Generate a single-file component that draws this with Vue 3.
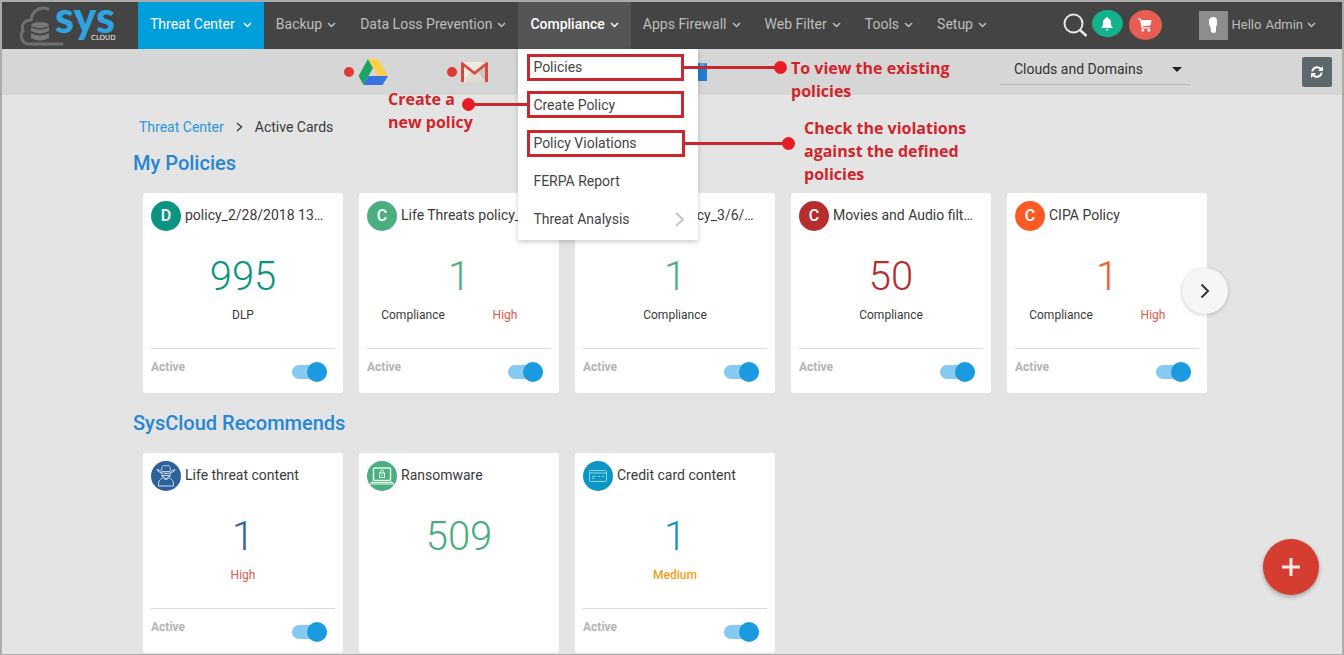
<script setup>
import { ref } from 'vue'

const nav = [
  { label: 'Threat Center', state: 'current' },
  { label: 'Backup' },
  { label: 'Data Loss Prevention' },
  { label: 'Compliance', state: 'open' },
  { label: 'Apps Firewall' },
  { label: 'Web Filter' },
  { label: 'Tools' },
  { label: 'Setup' },
]

const menu = [
  { label: 'Policies', key: 'policies' },
  { label: 'Create Policy', key: 'create' },
  { label: 'Policy Violations', key: 'violations' },
  { label: 'FERPA Report' },
  { label: 'Threat Analysis', more: true },
]

const sections = ref([
  {
    title: 'My Policies',
    scroll: true,
    cards: [
      { title: 'policy_2/28/2018 13:45', letter: 'D', tone: 'teal', count: 995, type: 'DLP', on: true },
      { title: 'Life Threats policy_3/6/2018', letter: 'C', tone: 'green', count: 1, type: 'Compliance', level: 'High', on: true },
      { title: 'Violence policy_3/6/2018', letter: 'C', tone: 'green', count: 1, type: 'Compliance', on: true },
      { title: 'Movies and Audio filter', letter: 'C', tone: 'red', count: 50, type: 'Compliance', on: true },
      { title: 'CIPA Policy', letter: 'C', tone: 'orange', count: 1, type: 'Compliance', level: 'High', on: true },
    ],
  },
  {
    title: 'SysCloud Recommends',
    cards: [
      { title: 'Life threat content', icon: 'spy', tone: 'navy', count: 1, level: 'High', on: true },
      { title: 'Ransomware', icon: 'laptop', tone: 'green', count: 509 },
      { title: 'Credit card content', icon: 'card', tone: 'blue', count: 1, level: 'Medium', on: true },
    ],
  },
])
</script>

<template>
  <div class="page">
    <header class="topbar">
      <a class="logo" href="#" aria-label="sys cloud">
        <svg class="cloud" width="44" height="40" viewBox="0 0 44 40" fill="none">
          <path d="M28 3 C20 0 12 5 11 14 C4 14 1 19 3 25 C-1 29 2 38 9 38 H42" stroke="#707070" stroke-width="3" stroke-linecap="round" />
          <g fill="#777">
            <ellipse cx="20" cy="19" rx="9" ry="3" />
            <path d="M11 21 Q20 26 29 21 V25 Q20 30 11 25Z" />
            <path d="M11 27 Q20 32 29 27 V32 Q20 37 11 32Z" />
          </g>
        </svg>
        <span class="sys">sys</span>
        <span class="cloudword">CLOUD</span>
      </a>
      <nav class="nav">
        <div v-for="n in nav" :key="n.label" class="navitem" :class="n.state">
          <a href="#" class="navlink">
            {{ n.label }}
            <svg width="9" height="6" viewBox="0 0 9 6" fill="none"><path d="M1 1 L4.500 4.500 L8 1" stroke="currentColor" stroke-width="1.500" /></svg>
          </a>
          <div v-if="n.state === 'open'" class="menu">
            <a v-for="m in menu" :key="m.label" href="#" class="menuitem">
              {{ m.label }}
              <svg v-if="m.more" width="9" height="15" viewBox="0 0 9 15" fill="none"><path d="M1 1 L8 7.500 L1 14" stroke="#c4c4c4" stroke-width="2" /></svg>
            </a>
          </div>
        </div>
      </nav>
      <div class="tools">
        <button class="plain" aria-label="Search">
          <svg width="25" height="24" viewBox="0 0 25 24" fill="none" stroke="#e9e9e9"><circle cx="10.500" cy="10.500" r="9" stroke-width="2" /><path d="M17 17 L23.500 23" stroke-width="2.500" /></svg>
        </button>
        <button class="bell" aria-label="Notifications">
          <svg width="12" height="14" viewBox="0 0 12 14" fill="#fff"><path d="M6 0 a1 1 0 0 1 1 1 C9.500 2 10 4 10 6 C10 8.500 10.500 9.500 12 11 H0 C1.500 9.500 2 8.500 2 6 C2 4 2.500 2 5 1 A1 1 0 0 1 6 0Z M4.500 12 H7.500 A1.500 1.500 0 0 1 4.500 12Z" /></svg>
        </button>
        <button class="cart" aria-label="Cart">
          <svg width="14" height="14" viewBox="0 0 14 14" fill="#fff"><path d="M0 0.500 H2.800 L3.200 2 H13.500 L12.500 7.500 L4.500 8.300 L4.700 9.300 H12 V10.500 H3.600 L2 1.800 H0Z" /><circle cx="4.800" cy="12.300" r="1.400" /><circle cx="11" cy="12.300" r="1.400" /></svg>
        </button>
        <a href="#" class="user">
          <span class="photo">
            <svg width="10" height="18" viewBox="0 0 10 18" fill="#fff"><path d="M5 1 C8 1 9.500 3 9 6 C9 9 8.500 10 8 11 V16 Q6 18 3 16 L2.500 11 C1 9 1 8 1 5 C1 2 3 1 5 1Z" /></svg>
          </span>
          <span>Hello</span><span>Admin</span>
          <svg width="9" height="6" viewBox="0 0 9 6" fill="none"><path d="M1 1 L4.500 4.500 L8 1" stroke="currentColor" stroke-width="1.500" /></svg>
        </a>
      </div>
    </header>

    <div class="subbar">
      <div class="sources">
        <button class="source" aria-label="Google Drive">
          <i class="dot"></i>
          <svg width="30" height="26" viewBox="0 0 30 26"><path d="M10 0 L0.500 17 L5.500 26 L15 9Z" fill="#1da462" /><path d="M10 0 H20 L30 17 H20Z" fill="#ffcf48" /><path d="M10.500 17 H30 L24.500 26 H5.500Z" fill="#3671e0" /></svg>
        </button>
        <button class="source" aria-label="Gmail">
          <i class="dot"></i>
          <svg width="27" height="20" viewBox="0 0 27 20"><rect width="27" height="20" rx="1" fill="#eeeae2" /><path d="M13.500 11 L25 2 V20 H21Z" fill="#c9c6c0" /><path d="M3 20 L10 9 L13.500 12 L17 9 L24 20Z" fill="#e1ddd3" /><path d="M0 1 Q0 0 1.500 0 L13.500 9.500 L25.500 0 Q27 0 27 1 V20 H24 V4.500 L13.500 13 L3 4.500 V20 H0Z" fill="#d54c3f" /></svg>
        </button>
        <button class="source" aria-label="OneDrive">
          <i class="dot"></i>
          <svg width="27" height="18" viewBox="0 0 27 18"><path d="M6 17 a5 5 0 0 1 1-10 a7 7 0 0 1 13 0 a5 5 0 0 1 1 10Z" fill="#2a7fd0" /></svg>
        </button>
        <button class="source outlook" aria-label="Outlook">
          <i class="dot"></i>
          <svg width="40" height="18" viewBox="0 0 40 18"><rect width="40" height="18" fill="#1f7fd0" /><path d="M33 6 L40 0 H33Z" fill="#5aa3df" /></svg>
        </button>
      </div>
      <div class="picker">
        <select aria-label="Clouds and Domains"><option>Clouds and Domains</option></select>
        <svg width="10" height="5" viewBox="0 0 10 5"><path d="M0 0 H10 L5 5Z" fill="#222" /></svg>
      </div>
      <button class="refresh" aria-label="Refresh">
        <svg width="12" height="12" viewBox="0 0 12 12" fill="none" stroke="#fff" stroke-width="2"><path d="M1.300 5.300 A4.800 4.800 0 0 1 9.500 2.800" /><path d="M10.700 6.700 A4.800 4.800 0 0 1 2.500 9.200" /><path d="M12 0 V5 H7Z M0 12 V7 H5Z" fill="#fff" stroke="none" /></svg>
      </button>
    </div>

    <main class="content">
      <div class="crumbs">
        <a href="#">Threat Center</a>
        <svg width="7" height="10" viewBox="0 0 7 10" fill="none"><path d="M1 1 L5.500 5 L1 9" stroke="#444" stroke-width="1.500" /></svg>
        <span>Active Cards</span>
      </div>
      <section v-for="s in sections" :key="s.title">
        <h2>{{ s.title }}</h2>
        <div class="cards">
          <article v-for="c in s.cards" :key="c.title" class="card" :class="c.tone">
            <div class="head">
              <span class="badge">
                <template v-if="c.letter">{{ c.letter }}</template>
                <svg v-else-if="c.icon === 'spy'" width="22" height="24" viewBox="0 0 22 24" fill="none" stroke="#cfe0f2"><path d="M6.500 6 C7 2 8 1 9.500 1.500 Q11 2.500 12.500 1.500 C14 1 15 2 15.500 6" /><path d="M2 5.500 Q11 10 20 5.500 Q19 9 11 9.500 Q3 9 2 5.500Z" /><path d="M6.500 9 C6.500 13 9 15.500 11 15.500 C13 15.500 15.500 13 15.500 9" /><path d="M7 11.500 H15 M7 11.500 L11 15 L15 11.500" /><path d="M7.500 14 C4 16 3.500 17 3.500 22 H18.500 C18.500 17 18 16 14.500 14" /></svg>
                <svg v-else-if="c.icon === 'laptop'" width="26" height="18" viewBox="0 0 26 18" fill="none" stroke="#e8f7ee"><rect x="4.500" y="1" width="17" height="12.500" rx="1" stroke-width="1.500" /><path d="M4 14 L1 17 H25 L22 14" /><path d="M3 15.500 H23" /><rect x="10.500" y="6" width="5" height="4.500" /><path d="M11.500 6 V4.500 a1.500 1.500 0 0 1 3 0 V6 M13 7.500 V9" /></svg>
                <svg v-else width="18" height="12" viewBox="0 0 18 12" fill="none" stroke="#8fd6f0"><rect x="0.500" y="0.500" width="17" height="11" rx="1" /><path d="M1 3 H17 M3 6.500 H7 M3 8.500 H5 M9 6.500 H11 M12.500 6.500 H15" /></svg>
              </span>
              <h3>{{ c.title }}</h3>
            </div>
            <div class="count">{{ c.count }}</div>
            <div class="labels">
              <span v-if="c.type">{{ c.type }}</span>
              <span v-if="c.level" :class="c.level.toLowerCase()">{{ c.level }}</span>
            </div>
            <label v-if="c.on !== undefined" class="foot">
              <span>Active</span>
              <input v-model="c.on" type="checkbox" role="switch" />
            </label>
          </article>
          <button v-if="s.scroll" class="next" aria-label="Next">
            <svg width="10" height="16" viewBox="0 0 10 16" fill="none"><path d="M1.500 1.500 L8 8 L1.500 14.500" stroke="#333" stroke-width="2" /></svg>
          </button>
        </div>
      </section>
    </main>

    <button class="fab" aria-label="Add">
      <svg width="18" height="18" viewBox="0 0 18 18"><path d="M9 0 V18 M0 9 H18" stroke="#fbe9e7" stroke-width="3" /></svg>
    </button>

    <div class="box box-policies"></div>
    <div class="box box-create"></div>
    <div class="box box-violations"></div>
    <div class="line line-policies"></div>
    <div class="line line-create"></div>
    <div class="line line-violations"></div>
    <p class="note note-policies">To view the existing<br />policies</p>
    <p class="note note-create">Create a<br />new policy</p>
    <p class="note note-violations">Check the violations<br />against the defined<br />policies</p>
  </div>
</template>

<style>
body { margin: 0; }
</style>

<style scoped>
* { box-sizing: border-box; }
.page {
  position: relative;
  min-height: 100vh;
  border: 2px solid #ababab;
  border-bottom-width: 1px;
  background: #e4e4e4;
  color: #3a3a3a;
  font: 14px/16px Roboto, "Liberation Sans", sans-serif;
}
a { color: inherit; text-decoration: none; }
button { border: 0; padding: 0; background: none; font: inherit; display: flex; align-items: center; justify-content: center; }
svg { display: block; flex: none; }

.topbar { display: flex; height: 47px; background: #444; color: #bdbdbd; }
.logo { position: relative; flex: none; width: 136px; }
.cloud { position: absolute; left: 18px; top: 4px; }
.sys { position: absolute; left: 53px; top: -9px; font: 900 43px/48px Lato, sans-serif; color: #2fa4e0; }
.cloudword { position: absolute; left: 89px; top: 31px; font: 7px/10px "DejaVu Sans", sans-serif; color: #f0f0f0; }
.nav { display: flex; flex: none; }
.navitem { position: relative; display: flex; }
.navlink { display: flex; align-items: center; gap: 5px; padding: 0 12px 4px; white-space: nowrap; }
.navlink svg { margin-top: 3px; }
.current { background: #009fdc; color: #fff; }
.current .navlink { gap: 8px; }
.open { background: #555; color: #fff; }
.open .navlink { font-weight: 500; }
.menu { position: absolute; z-index: 3; left: 0; top: 100%; width: 180px; padding-bottom: 1px; background: #fff; color: #444; box-shadow: 0 2px 5px rgba(0, 0, 0, 0.2); }
.menuitem { display: flex; align-items: center; justify-content: space-between; height: 38px; padding: 0 14px 2px 15px; }
.tools { display: flex; margin-left: auto; padding: 8px 26px 0 0; }
.plain { height: 30px; margin-right: 4px; }
.bell { width: 31px; height: 27px; margin-right: 6px; border-radius: 50%; background: #13b18c; }
.cart { width: 33px; height: 30px; margin-right: 37px; border-radius: 50%; background: #e95c52; }
.user { display: flex; align-items: center; gap: 4px; height: 30px; font-size: 13px; }
.photo { display: flex; align-items: center; justify-content: center; width: 29px; height: 29px; background: #8d8d8d; }

.subbar { display: flex; height: 46px; background: #d6d6d6; }
.sources { display: flex; padding-left: 342px; }
.source { width: 103px; gap: 4px; justify-content: flex-start; }
.dot { width: 10px; height: 10px; border-radius: 50%; background: #de3a35; }
.picker { position: relative; display: flex; align-items: center; width: 190px; height: 36px; margin-left: auto; margin-right: 112px; border-bottom: 1px solid #b5b5b5; }
.picker select { width: 100%; height: 36px; padding: 4px 14px 0; border: 0; background: none; appearance: none; color: #333; font: inherit; }
.picker svg { position: absolute; right: 8px; top: 18px; }
.refresh { width: 30px; height: 30px; margin: 8px 10px 0 0; border-radius: 2px; background: #5d686c; }

.content { max-width: 1078px; margin: 0 auto; padding-top: 20px; }
.crumbs { display: flex; align-items: center; gap: 12px; height: 24px; padding-left: 6px; }
.crumbs a { color: #2b96dc; }
h2 { margin: 18px 0; font-size: 20px; line-height: 24px; font-weight: 500; color: #2587d3; }
.crumbs + section h2 { margin-top: 12px; }
.cards { position: relative; display: flex; gap: 16px; padding-left: 10px; }
.card { display: flex; flex-direction: column; flex: none; width: 200px; min-height: 200px; padding: 8px; border-radius: 3px; background: #fff; }
.head { display: flex; align-items: center; gap: 4px; height: 30px; }
.badge { display: flex; flex: none; align-items: center; justify-content: center; width: 30px; height: 30px; border-radius: 50%; background: var(--tone); color: #fff; font-size: 16px; font-weight: 500; }
h3 { flex: 1; margin: 0; padding: 0 10px 2px 0; overflow: hidden; text-overflow: ellipsis; white-space: nowrap; font-size: 14px; line-height: 18px; font-weight: 400; }
.count { margin-top: 22px; color: var(--tone); font-size: 40px; line-height: 48px; font-weight: 300; text-align: center; }
.labels { display: flex; height: 16px; margin-top: 6px; font-size: 12px; text-align: center; }
.labels span { flex: 1; }
.high { color: #e0584b; }
.medium { color: #f0a020; font-weight: 500; }
.foot { display: flex; align-items: flex-start; justify-content: space-between; margin-top: 25px; padding: 10px 8px 0 0; border-top: 1px solid #d8d8d8; color: #b4b4b4; font-size: 12px; font-weight: 700; }
.foot input { position: relative; appearance: none; width: 35px; height: 14px; margin: 6px 0 0; border-radius: 7px; background: #86caef; }
.foot input::after { content: ""; position: absolute; right: 0; top: -3px; width: 20px; height: 20px; border-radius: 50%; background: #1a9be0; }
.foot input:not(:checked)::after { right: auto; left: 0; }
.teal { --tone: #0b9482; }
.green { --tone: #4aae7e; }
.red { --tone: #b52d2d; }
.orange { --tone: #fb5a24; }
.navy { --tone: #2c6299; }
.blue { --tone: #0d96c4; }
.next { position: absolute; left: 1049px; top: 75px; width: 46px; height: 46px; border-radius: 50%; background: #f6f6f6; box-shadow: 0 1px 4px rgba(0, 0, 0, 0.2); }
.fab { position: fixed; right: 25px; bottom: 60px; width: 56px; height: 56px; border-radius: 50%; background: #d43d30; box-shadow: 0 2px 4px rgba(0, 0, 0, 0.3); }

.box { position: absolute; z-index: 4; left: 525px; width: 157px; height: 27px; border: 3px solid #c9262d; pointer-events: none; }
.box-policies { top: 52px; }
.box-create { top: 89px; }
.box-violations { top: 128px; width: 158px; }
.line { position: absolute; z-index: 4; height: 3px; background: #c9262d; }
.line::after { content: ""; position: absolute; right: -6px; top: -5px; width: 13px; height: 13px; border-radius: 50%; background: #e81c24; }
.line-policies { left: 681px; top: 64px; width: 98px; }
.line-create { left: 466px; top: 101px; width: 60px; }
.line-create::after { right: auto; left: -6px; }
.line-violations { left: 682px; top: 140px; width: 105px; }
.note { position: absolute; z-index: 2; margin: 0; color: #d0242b; font: 700 16px/23px "Open Sans", "Noto Sans", sans-serif; white-space: nowrap; }
.note-policies { left: 789px; top: 55px; }
.note-create { left: 386px; top: 86px; }
.note-violations { left: 802px; top: 115px; }
</style>
